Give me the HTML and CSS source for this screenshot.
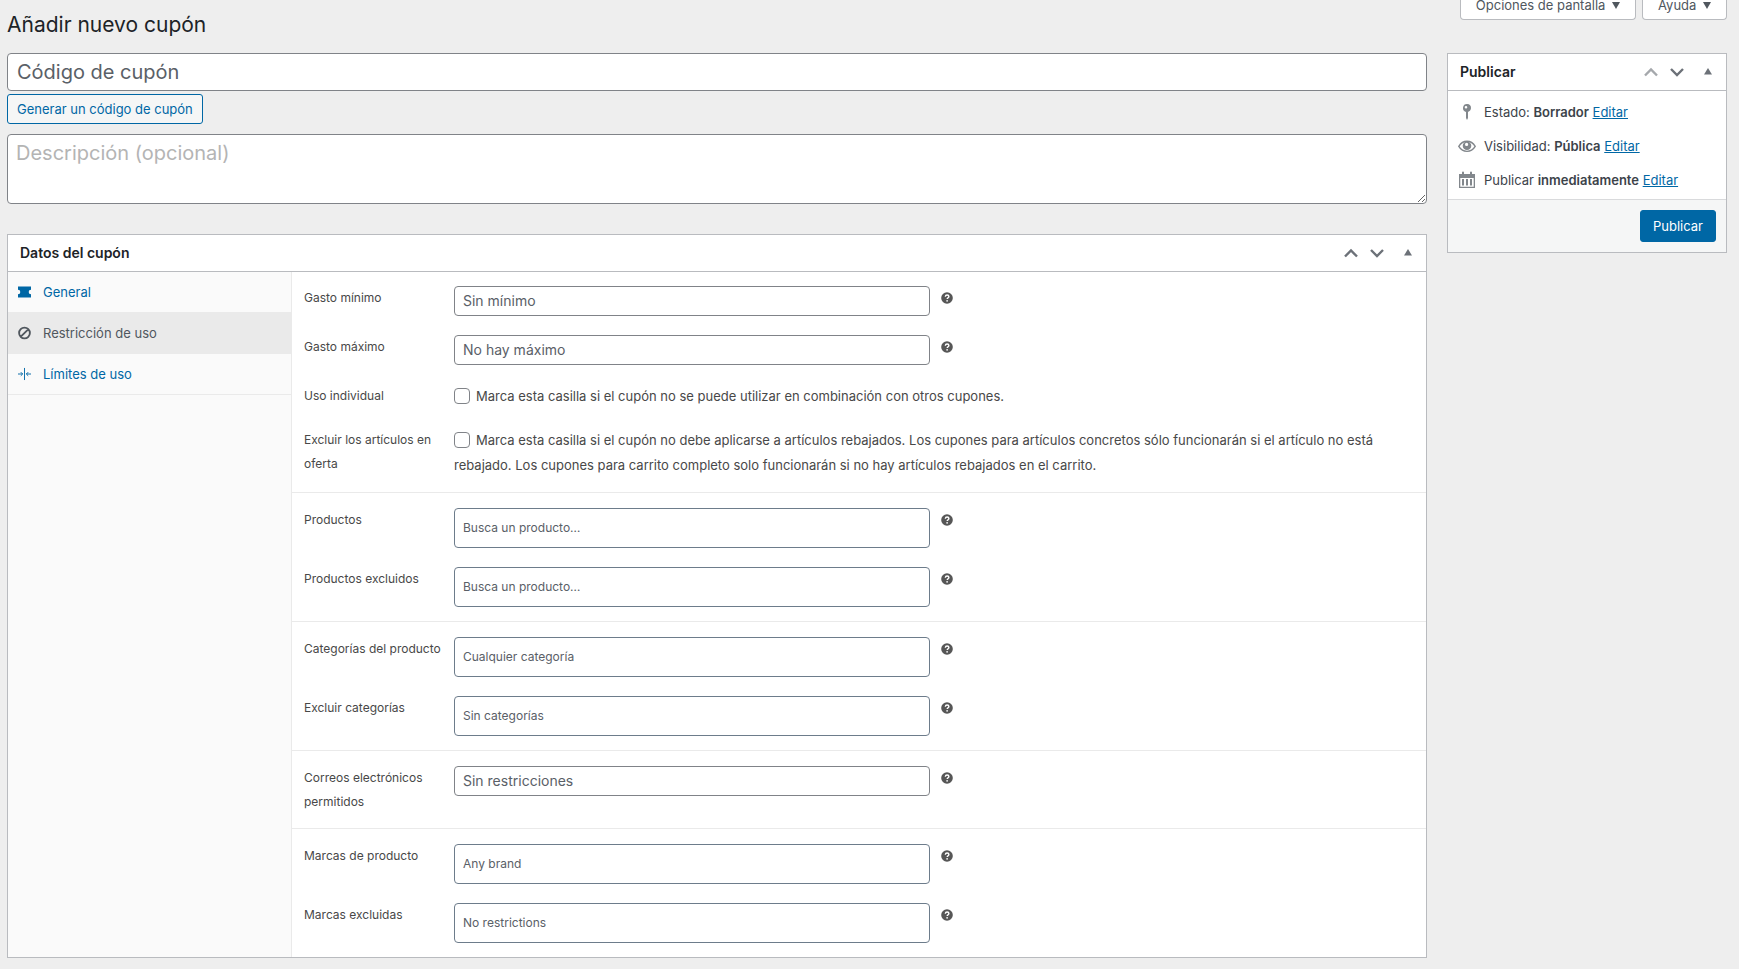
FILE: index.html
```html
<!doctype html>
<html lang="es">
<head>
<meta charset="UTF-8">
<meta name="viewport" content="width=device-width, initial-scale=1">
<title>Añadir nuevo cupón</title>
<link rel="stylesheet" href="styles.css">
</head>

<body>
<!-- icons shared by the whole page -->
<svg class="icon-defs" aria-hidden="true">
    <symbol id="icon-up" viewBox="0 0 20 20"><path d="M4 13.5l6-6 6 6" fill="none" stroke="currentColor" stroke-width="2.4"/></symbol>
    <symbol id="icon-down" viewBox="0 0 20 20"><path d="M4 7l6 6 6-6" fill="none" stroke="currentColor" stroke-width="2.4"/></symbol>
    <symbol id="icon-toggle" viewBox="0 0 20 20"><path d="M10 6l4 6.500H6z" fill="currentColor"/></symbol>
    <symbol id="icon-caret" viewBox="0 0 8 7"><path d="M0 0h8L4 7z" fill="currentColor"/></symbol>
    <symbol id="icon-help" viewBox="0 0 12 12">
        <circle cx="6" cy="6" r="5.8" fill="currentColor"/>
        <path d="M4.300 4.700C4.400 3.500 5.200 3 6.100 3c1 0 1.800.6 1.800 1.500C7.900 5.700 6.300 5.700 6.200 7" fill="none" stroke="#fff" stroke-width="1.4"/>
        <circle cx="6.100" cy="8.800" r=".85" fill="#fff"/>
    </symbol>
    <symbol id="icon-ticket" viewBox="0 0 14 12"><path d="M0 0h14v3.500a2.500 2.500 0 0 0 0 5V12H0V8.500a2.500 2.500 0 0 0 0-5z" fill="currentColor"/></symbol>
    <symbol id="icon-restrict" viewBox="0 0 14 14"><path d="M3 11L11 3M7 1.200a5.800 5.800 0 1 0 0 11.600A5.800 5.800 0 0 0 7 1.200z" fill="none" stroke="currentColor" stroke-width="2"/></symbol>
    <symbol id="icon-limits" viewBox="0 0 14 14"><path d="M7 .5v13M0 7h5M14 7H9M3 5l2 2-2 2M11 5L9 7l2 2" fill="none" stroke="currentColor"/></symbol>
    <symbol id="icon-status" viewBox="0 0 20 20"><path fill-rule="evenodd" d="M14 6c0 1.900-1.300 3.400-3 3.900V16l-1 2-1-2V9.900A4 4 0 1 1 14 6zM9 4a1.300 1.300 0 1 0 0 2.600A1.300 1.300 0 0 0 9 4z" fill="currentColor"/></symbol>
    <symbol id="icon-eye" viewBox="0 0 20 20"><path d="M1.800 10.400C3.800 7 6.600 5.300 10 5.300s6.200 1.700 8.200 5.100c-2 3.300-4.800 5-8.200 5s-6.200-1.700-8.200-5z" fill="none" stroke="currentColor" stroke-width="1.4"/><path fill-rule="evenodd" d="M10 5.500a4.300 4.300 0 1 1 0 8.600 4.300 4.300 0 0 1 0-8.600zM9.600 6.800a1.600 1.600 0 1 0 0 3.200 1.600 1.600 0 0 0 0-3.200z" fill="currentColor"/></symbol>
    <symbol id="icon-calendar" viewBox="0 0 20 20"><path fill-rule="evenodd" d="M2 4h3V2.500a1 1 0 0 1 2 0V4h6V2.500a1 1 0 0 1 2 0V4h3v14H2zM3.300 8v8.700h13.400V8zM5 9h2v6.500H5zM9 9h2v6.500H9zM13 9h2v6.500h-2z" fill="currentColor"/></symbol>
</svg>

<header class="page-header">
    <h1>Añadir nuevo cupón</h1>
    <div class="screen-meta">
        <button type="button">Opciones de pantalla <svg><use href="#icon-caret"/></svg></button>
        <button type="button">Ayuda <svg><use href="#icon-caret"/></svg></button>
    </div>
</header>

<form class="columns">
<main>
    <input class="coupon-code" type="text" aria-label="Código de cupón" placeholder="Código de cupón">
    <button type="button" class="button">Generar un código de cupón</button>
    <textarea class="coupon-description" aria-label="Descripción" placeholder="Descripción (opcional)"></textarea>

    <section class="postbox">
        <div class="postbox-header">
            <h2>Datos del cupón</h2>
            <div class="handle-actions">
                <button type="button" aria-label="Subir"><svg><use href="#icon-up"/></svg></button>
                <button type="button" aria-label="Bajar"><svg><use href="#icon-down"/></svg></button>
                <button type="button" class="toggle" aria-label="Alternar panel"><svg><use href="#icon-toggle"/></svg></button>
            </div>
        </div>
        <div class="coupon-data">
            <nav class="tabs">
                <a href="#general"><svg class="ticket"><use href="#icon-ticket"/></svg>General</a>
                <a href="#restricciones" class="active"><svg><use href="#icon-restrict"/></svg>Restricción de uso</a>
                <a href="#limites"><svg><use href="#icon-limits"/></svg>Límites de uso</a>
            </nav>
            <div class="panel" id="restricciones">
                <div class="options-group">
                    <div class="form-field">
                        <label for="minimum">Gasto mínimo</label>
                        <input type="text" id="minimum" placeholder="Sin mínimo">
                        <svg class="help"><use href="#icon-help"/></svg>
                    </div>
                    <div class="form-field">
                        <label for="maximum">Gasto máximo</label>
                        <input type="text" id="maximum" placeholder="No hay máximo">
                        <svg class="help"><use href="#icon-help"/></svg>
                    </div>
                    <div class="form-field">
                        <label for="individual">Uso individual</label>
                        <div class="check"><input type="checkbox" id="individual"><span>Marca esta casilla si el cupón no se puede utilizar en combinación con otros cupones.</span></div>
                    </div>
                    <div class="form-field">
                        <label for="sale">Excluir los artículos en oferta</label>
                        <div class="check"><input type="checkbox" id="sale"><span>Marca esta casilla si el cupón no debe aplicarse a artículos rebajados. Los cupones para artículos concretos sólo funcionarán si el artículo no está rebajado. Los cupones para carrito completo solo funcionarán si no hay artículos rebajados en el carrito.</span></div>
                    </div>
                </div>
                <div class="options-group">
                    <div class="form-field">
                        <label for="products">Productos</label>
                        <input type="search" class="search" id="products" placeholder="Busca un producto…">
                        <svg class="help"><use href="#icon-help"/></svg>
                    </div>
                    <div class="form-field">
                        <label for="ex-products">Productos excluidos</label>
                        <input type="search" class="search" id="ex-products" placeholder="Busca un producto…">
                        <svg class="help"><use href="#icon-help"/></svg>
                    </div>
                </div>
                <div class="options-group">
                    <div class="form-field">
                        <label for="categories">Categorías del producto</label>
                        <input type="search" class="search" id="categories" placeholder="Cualquier categoría">
                        <svg class="help"><use href="#icon-help"/></svg>
                    </div>
                    <div class="form-field">
                        <label for="ex-categories">Excluir categorías</label>
                        <input type="search" class="search" id="ex-categories" placeholder="Sin categorías">
                        <svg class="help"><use href="#icon-help"/></svg>
                    </div>
                </div>
                <div class="options-group">
                    <div class="form-field">
                        <label for="emails">Correos electrónicos permitidos</label>
                        <input type="text" id="emails" placeholder="Sin restricciones">
                        <svg class="help"><use href="#icon-help"/></svg>
                    </div>
                </div>
                <div class="options-group">
                    <div class="form-field">
                        <label for="brands">Marcas de producto</label>
                        <input type="search" class="search" id="brands" placeholder="Any brand">
                        <svg class="help"><use href="#icon-help"/></svg>
                    </div>
                    <div class="form-field">
                        <label for="ex-brands">Marcas excluidas</label>
                        <input type="search" class="search" id="ex-brands" placeholder="No restrictions">
                        <svg class="help"><use href="#icon-help"/></svg>
                    </div>
                </div>
            </div>
        </div>
    </section>
</main>

<aside class="postbox">
    <div class="postbox-header">
        <h2>Publicar</h2>
        <div class="handle-actions">
            <button type="button" aria-label="Subir" disabled><svg><use href="#icon-up"/></svg></button>
            <button type="button" aria-label="Bajar"><svg><use href="#icon-down"/></svg></button>
            <button type="button" class="toggle" aria-label="Alternar panel"><svg><use href="#icon-toggle"/></svg></button>
        </div>
    </div>
    <ul class="publish-info">
        <li><svg><use href="#icon-status"/></svg><span>Estado: <b>Borrador</b> <a href="#estado">Editar</a></span></li>
        <li><svg><use href="#icon-eye"/></svg><span>Visibilidad: <b>Pública</b> <a href="#visibilidad">Editar</a></span></li>
        <li><svg><use href="#icon-calendar"/></svg><span>Publicar <b>inmediatamente</b> <a href="#fecha">Editar</a></span></li>
    </ul>
    <div class="publish-actions">
        <button type="submit" class="button primary">Publicar</button>
    </div>
</aside>
</form>
</body>
</html>
```

FILE: styles.css
```css
*,
*:after,
*:before {
    box-sizing: border-box;
}
body {
    background: #eee;
    color: #3c434a;
    font-family: Inter, "Liberation Sans", sans-serif;
    font-size: 13px;
    line-height: 18px;
    margin: 0;
    padding: 0 12px 11px 7px;
}
button,
input,
textarea {
    font-family: inherit;
    margin: 0;
}
a {
    color: #0067a5;
}
b {
    font-weight: 600;
}
.icon-defs {
    display: block;
    height: 0;
    width: 0;
}

/* header */
.page-header {
    align-items: flex-start;
    display: flex;
    justify-content: space-between;
}
h1 {
    color: #1d2327;
    font-size: 21px;
    font-weight: 400;
    line-height: 30px;
    margin: 10px 0 13px;
}
.screen-meta {
    display: flex;
    gap: 6px;
}
.screen-meta button {
    background: #fff;
    border: 1px solid #b9bbbf;
    border-radius: 0 0 4px 4px;
    border-top: 0;
    color: #50575e;
    font-size: 13px;
    height: 20px;
    line-height: 10px;
    padding: 0 15px 9px;
}
.screen-meta svg {
    height: 7px;
    margin-left: 3px;
    vertical-align: 1px;
    width: 8px;
}

/* layout */
.columns {
    align-items: flex-start;
    display: flex;
    gap: 20px;
}
main {
    flex: 1;
    min-width: 0;
}
aside {
    flex: 0 0 280px;
}
.coupon-code,
.coupon-description {
    background: #fff;
    border: 1px solid #808388;
    border-radius: 4px;
    display: block;
    font-size: 20px;
    width: 100%;
}
.coupon-code {
    height: 38px;
    margin-bottom: 3px;
    padding: 0 9px;
}
.coupon-description {
    height: 70px;
    line-height: 30px;
    margin: 10px 0 30px;
    padding: 3px 8px;
}
::placeholder {
    color: #5a6067;
    opacity: 1;
}
.coupon-description::placeholder {
    color: #b4b4b4;
}
.button {
    background: #f5f6f6;
    border: 1px solid #0067a5;
    border-radius: 3px;
    color: #0067a5;
    display: block;
    font-size: 13px;
    height: 30px;
    padding: 0 9px;
}
.primary {
    background: #0067a5;
    color: #fff;
    height: 32px;
    padding: 0 12px;
}

/* boxes */
.postbox {
    background: #fff;
    border: 1px solid #b9bbbf;
}
.postbox-header {
    align-items: center;
    border-bottom: 1px solid #b9bbbf;
    display: flex;
    height: 37px;
    justify-content: space-between;
}
h2 {
    color: #1d2327;
    font-size: 14px;
    font-weight: 600;
    margin: 0;
    padding: 0 12px;
}
.handle-actions {
    display: flex;
    padding-right: 5px;
}
.handle-actions button {
    background: none;
    border: 0;
    color: #6c7178;
    height: 20px;
    padding: 0 3px;
    width: 26px;
}
.handle-actions button:disabled {
    color: #a5a8ac;
}
.handle-actions .toggle {
    margin-left: 5px;
}
.handle-actions svg {
    display: block;
    height: 20px;
    width: 20px;
}

/* coupon data */
.coupon-data {
    display: flex;
}
.tabs {
    background: #fafafa;
    border-right: 1px solid #eaeaea;
    flex: 0 0 25%;
    max-width: 284px;
}
.tabs a {
    align-items: center;
    border-bottom: 1px solid #eaeaea;
    display: flex;
    gap: 12px;
    height: 41px;
    padding: 0 10px;
    text-decoration: none;
}
.tabs .active {
    background: #eaeaea;
    color: #50575e;
}
.tabs svg {
    height: 14px;
    width: 13px;
}
.panel {
    color: #484848;
    flex: 1;
    min-width: 0;
}
.options-group {
    border-bottom: 1px solid #eaeaea;
    border-top: 1px solid #fff;
    padding: 9px 0;
}
.options-group:first-child {
    border-top: 0;
}
.options-group:last-child {
    border-bottom: 0;
}
.form-field {
    display: flex;
    padding: 5px 20px 5px 12px;
}
.form-field + .form-field {
    margin-top: 9px;
}
.form-field > label {
    flex: 0 0 150px;
    font-size: 12px;
    line-height: 24px;
    padding-right: 10px;
}
.form-field > input {
    background: #fff;
    border: 1px solid #808388;
    border-radius: 4px;
    flex: 0 1 476px;
    font-size: 14px;
    height: 30px;
    min-width: 0;
    padding: 0 8px 1px;
}
.form-field > .search {
    border-color: #6d7c8b;
    font-size: 12px;
    height: 40px;
}
.help {
    color: #565656;
    height: 12px;
    margin: 6px 11px;
    width: 12px;
}
.check {
    line-height: 25px;
}
.check input {
    appearance: none;
    background: #fff;
    border: 1px solid #808388;
    border-radius: 4px;
    height: 16px;
    margin-right: 6px;
    vertical-align: -3px;
    width: 16px;
}

/* publish */
.publish-info {
    list-style: none;
    margin: 0;
    padding: 4px 9px 2px;
}
.publish-info li {
    align-items: center;
    display: flex;
    gap: 7px;
    height: 34px;
}
.publish-info svg {
    color: #82878c;
    height: 20px;
    width: 20px;
}
.publish-actions {
    background: #f5f6f6;
    border-top: 1px solid #d9dadc;
    display: flex;
    justify-content: flex-end;
    padding: 10px;
}
```
